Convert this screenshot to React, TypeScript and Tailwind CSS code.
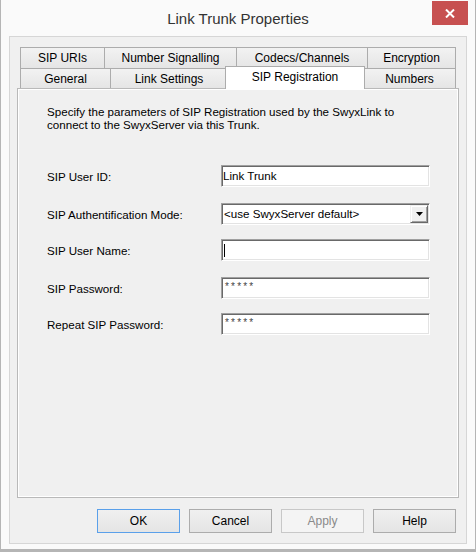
import React from 'react';

const UI_FONT = "font-['Liberation_Sans',Arial,sans-serif]";

const topTabs = [
  { label: 'SIP URIs', width: 'w-[84px]' },
  { label: 'Number Signalling', width: 'w-[132px]' },
  { label: 'Codecs/Channels', width: 'w-[131px]' },
  { label: 'Encryption', width: 'w-[89px]' },
];

// sunken 3D edit field, classic dialog look
const sunken =
  'border border-t-[#a0a0a0] border-l-[#a0a0a0] border-b-white border-r-white shadow-[inset_1px_1px_0_#696969,inset_-1px_-1px_0_#e3e3e3] bg-white';

function Tab({ label, width, last }: { label: string; width: string; last?: boolean }) {
  return (
    <div
      className={`${width} h-full flex items-center justify-center border-t border-l ${
        last ? 'border-r' : ''
      } border-[#acacac] bg-gradient-to-b from-[#f2f2f2] to-[#e5e5e5] text-[12px] text-black`}
    >
      {label}
    </div>
  );
}

function TextField({ value, caret, password }: { value?: string; caret?: boolean; password?: boolean }) {
  return (
    <div className={`w-[209px] h-[22px] ${sunken} flex items-center pl-[1px]`}>
      {caret && <div className="w-px h-[13px] bg-black ml-px" />}
      {value && !password && <span className="text-[11.6px] text-black leading-none">{value}</span>}
      {password && (
        <span className="text-[10px] text-[#444] tracking-[2.2px] leading-none mb-[2px] ml-[2px]">*****</span>
      )}
    </div>
  );
}

function ComboField({ value }: { value: string }) {
  return (
    <div className={`w-[209px] h-[22px] ${sunken} flex items-center p-px`}>
      <span className="flex-1 text-[11.6px] text-black leading-none pl-[1px]">{value}</span>
      <div className="w-[18px] h-full bg-[#f0f0f0] border border-t-[#f0f0f0] border-l-[#f0f0f0] border-b-[#696969] border-r-[#696969] shadow-[inset_1px_1px_0_#fff,inset_-1px_-1px_0_#a0a0a0] flex items-center justify-center">
        <svg width="7" height="4" viewBox="0 0 7 4">
          <path d="M0 0h7L3.5 4z" fill="#000" />
        </svg>
      </div>
    </div>
  );
}

function DialogButton({ label, primary, disabled }: { label: string; primary?: boolean; disabled?: boolean }) {
  let look = 'border-[#acacac] bg-gradient-to-b from-[#f0f0f0] to-[#e5e5e5] text-black';
  if (primary) look = 'border-[#5aa0ea] bg-gradient-to-b from-[#f0f0f0] to-[#e5e5e5] text-black';
  if (disabled) look = 'border-[#c8c8c8] bg-[#f4f4f4] text-[#8a8a8a]';
  return (
    <div className={`w-[83px] h-[24px] border ${look} flex items-center justify-center text-[12px]`}>
      {label}
    </div>
  );
}

export default function App() {
  const rows = [
    { label: 'SIP User ID:', mt: 'mt-0', field: <TextField value="Link Trunk" /> },
    { label: 'SIP Authentification Mode:', mt: 'mt-[16px]', field: <ComboField value="<use SwyxServer default>" /> },
    { label: 'SIP User Name:', mt: 'mt-[14px]', field: <TextField caret /> },
    { label: 'SIP Password:', mt: 'mt-[16px]', field: <TextField password value="x" /> },
    { label: 'Repeat SIP Password:', mt: 'mt-[14px]', field: <TextField password value="x" /> },
  ];

  return (
    <div className={`w-[476px] h-[552px] border-x border-b-[3px] border-[#b5b5b5] bg-[#fafafa] flex flex-col ${UI_FONT}`}>
      {/* title bar */}
      <div className="relative h-[36px] shrink-0 flex items-center justify-center pt-[3px]">
        <span className="text-[15px] text-[#333]">Link Trunk Properties</span>
        <div className="absolute top-[1px] right-[7px] w-[36px] h-[24px] bg-[#c75050] flex items-center justify-center">
          <svg width="10" height="9" viewBox="0 0 10 9">
            <path d="M1 0.5l8 8M9 0.5l-8 8" stroke="#fff" strokeWidth="2" />
          </svg>
        </div>
      </div>

      {/* client area */}
      <div className="mx-[8px] h-[508px] shrink-0 border border-[#d6d6d6] bg-[#f0f0f0] flex flex-col">
        <div className="mx-[7px] mt-[10px]">
          <div className="pl-[3px]">
            <div className="flex h-[21px]">
              {topTabs.map((t, i) => (
                <Tab key={t.label} label={t.label} width={t.width} last={i === topTabs.length - 1} />
              ))}
            </div>
            <div className="flex h-[20px]">
              <Tab label="General" width="w-[90px]" />
              <Tab label="Link Settings" width="w-[117px]" />
              <div className="relative z-10 self-end -mb-px -mx-[2px] w-[140px] h-[23px] border-t border-x border-[#acacac] bg-white flex items-center justify-center pb-[2px] text-[12px] text-black">
                SIP Registration
              </div>
              <Tab label="Numbers" width="w-[93px]" last />
            </div>
          </div>

          {/* page */}
          <div className="h-[410px] border border-[#b9b9b9] bg-[#f0f0f0] shadow-[inset_1px_1px_0_#fff,inset_-1px_-1px_0_#fff] pt-[16px] pl-[29px] text-[11.6px] text-black">
            <p className="leading-[13px]">
              Specify the parameters of SIP Registration used by the SwyxLink to
              <br />
              connect to the SwyxServer via this Trunk.
            </p>
            <div className="mt-[34px] flex flex-col">
              {rows.map(r => (
                <div key={r.label} className={`flex items-center ${r.mt}`}>
                  <div className="w-[174px] leading-[13px]">{r.label}</div>
                  {r.field}
                </div>
              ))}
            </div>
          </div>
        </div>

        <div className="mt-[11px] flex justify-end gap-[9px] pr-[10px]">
          <DialogButton label="OK" primary />
          <DialogButton label="Cancel" />
          <DialogButton label="Apply" disabled />
          <DialogButton label="Help" />
        </div>
      </div>
    </div>
  );
}
